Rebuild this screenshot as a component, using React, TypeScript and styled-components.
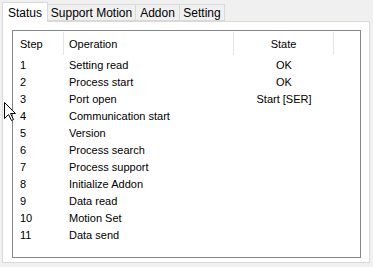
import React from "react";
import styled, { createGlobalStyle } from "styled-components";

const Global = createGlobalStyle`
  html, body { margin: 0; padding: 0; background: #f0f0f0; }
  body { font-family: "Liberation Sans", Arial, sans-serif; font-size: 11px; color: #000; }
`;

const Window = styled.div`
  position: relative;
  width: 373px;
  height: 267px;
  background: #f0f0f0;
  overflow: hidden;
`;

const TabBar = styled.div`
  display: flex;
  align-items: flex-end;
  height: 21px;
  padding-left: 2px;
  position: relative;
  z-index: 2;
`;

const Tab = styled.div<{ $active?: boolean; $first?: boolean; $w: number }>`
  box-sizing: border-box;
  display: flex;
  align-items: center;
  justify-content: center;
  width: ${(p) => p.$w}px;
  height: ${(p) => (p.$active ? 20 : 17)}px;
  margin-bottom: ${(p) => (p.$active ? -1 : 0)}px;
  margin-left: ${(p) => (p.$first ? 0 : -1)}px;
  padding-top: ${(p) => (p.$active ? 0 : 1)}px;
  background: ${(p) => (p.$active ? "#ffffff" : "#f0f0f0")};
  border: 1px solid #d9d9d9;
  border-bottom: ${(p) => (p.$active ? "none" : "1px solid #d9d9d9")};
  font-size: 12px;
  position: relative;
  z-index: ${(p) => (p.$active ? 2 : 1)};
  white-space: nowrap;
`;

const Panel = styled.div`
  box-sizing: border-box;
  width: 368px;
  height: 242px;
  margin-left: 2px;
  background: #ffffff;
  border: 1px solid #d9d9d9;
  padding: 8px 8px 4px 9px;
`;

const List = styled.div`
  box-sizing: border-box;
  width: 349px;
  height: 228px;
  border: 1px solid #828790;
  background: #ffffff;
`;

const HeaderRow = styled.div`
  display: grid;
  grid-template-columns: 51px 170px 100px;
  height: 25px;
  align-items: center;
`;

const HeaderCell = styled.div<{ $center?: boolean; $pad: number }>`
  box-sizing: border-box;
  height: 23px;
  display: flex;
  align-items: center;
  justify-content: ${(p) => (p.$center ? "center" : "flex-start")};
  padding-left: ${(p) => p.$pad}px;
  border-right: 1px solid #e5e5e5;
`;

const Row = styled.div`
  display: grid;
  grid-template-columns: 51px 170px 100px;
  height: 17px;
  align-items: center;
`;

const Cell = styled.div<{ $center?: boolean; $pad: number }>`
  padding-left: ${(p) => p.$pad}px;
  text-align: ${(p) => (p.$center ? "center" : "left")};
  white-space: nowrap;
`;

const Cursor = styled.svg`
  position: absolute;
  left: 4px;
  top: 102px;
  z-index: 5;
`;

const rows: [string, string, string][] = [
  ["1", "Setting read", "OK"],
  ["2", "Process start", "OK"],
  ["3", "Port open", "Start [SER]"],
  ["4", "Communication start", ""],
  ["5", "Version", ""],
  ["6", "Process search", ""],
  ["7", "Process support", ""],
  ["8", "Initialize Addon", ""],
  ["9", "Data read", ""],
  ["10", "Motion Set", ""],
  ["11", "Data send", ""],
];

export default function App() {
  return (
    <>
      <Global />
      <Window>
        <TabBar>
          <Tab $active $first $w={46}>Status</Tab>
          <Tab $w={89}>Support Motion</Tab>
          <Tab $w={45}>Addon</Tab>
          <Tab $w={46}>Setting</Tab>
        </TabBar>
        <Panel>
          <List>
            <HeaderRow>
              <HeaderCell $pad={7}>Step</HeaderCell>
              <HeaderCell $pad={5}>Operation</HeaderCell>
              <HeaderCell $center $pad={0}>State</HeaderCell>
            </HeaderRow>
            {rows.map(([n, op, st]) => (
              <Row key={n}>
                <Cell $pad={7}>{n}</Cell>
                <Cell $pad={5}>{op}</Cell>
                <Cell $center $pad={0}>{st}</Cell>
              </Row>
            ))}
          </List>
        </Panel>
        <Cursor width="13" height="20" viewBox="0 0 13 20">
          <path
            d="M0.5 0.5 L0.5 16.5 L4.5 12.5 L7.5 18.5 L9.5 17.5 L6.5 11.5 L11.5 11.5 Z"
            fill="#ffffff"
            stroke="#000000"
            strokeWidth="1"
          />
        </Cursor>
      </Window>
    </>
  );
}
